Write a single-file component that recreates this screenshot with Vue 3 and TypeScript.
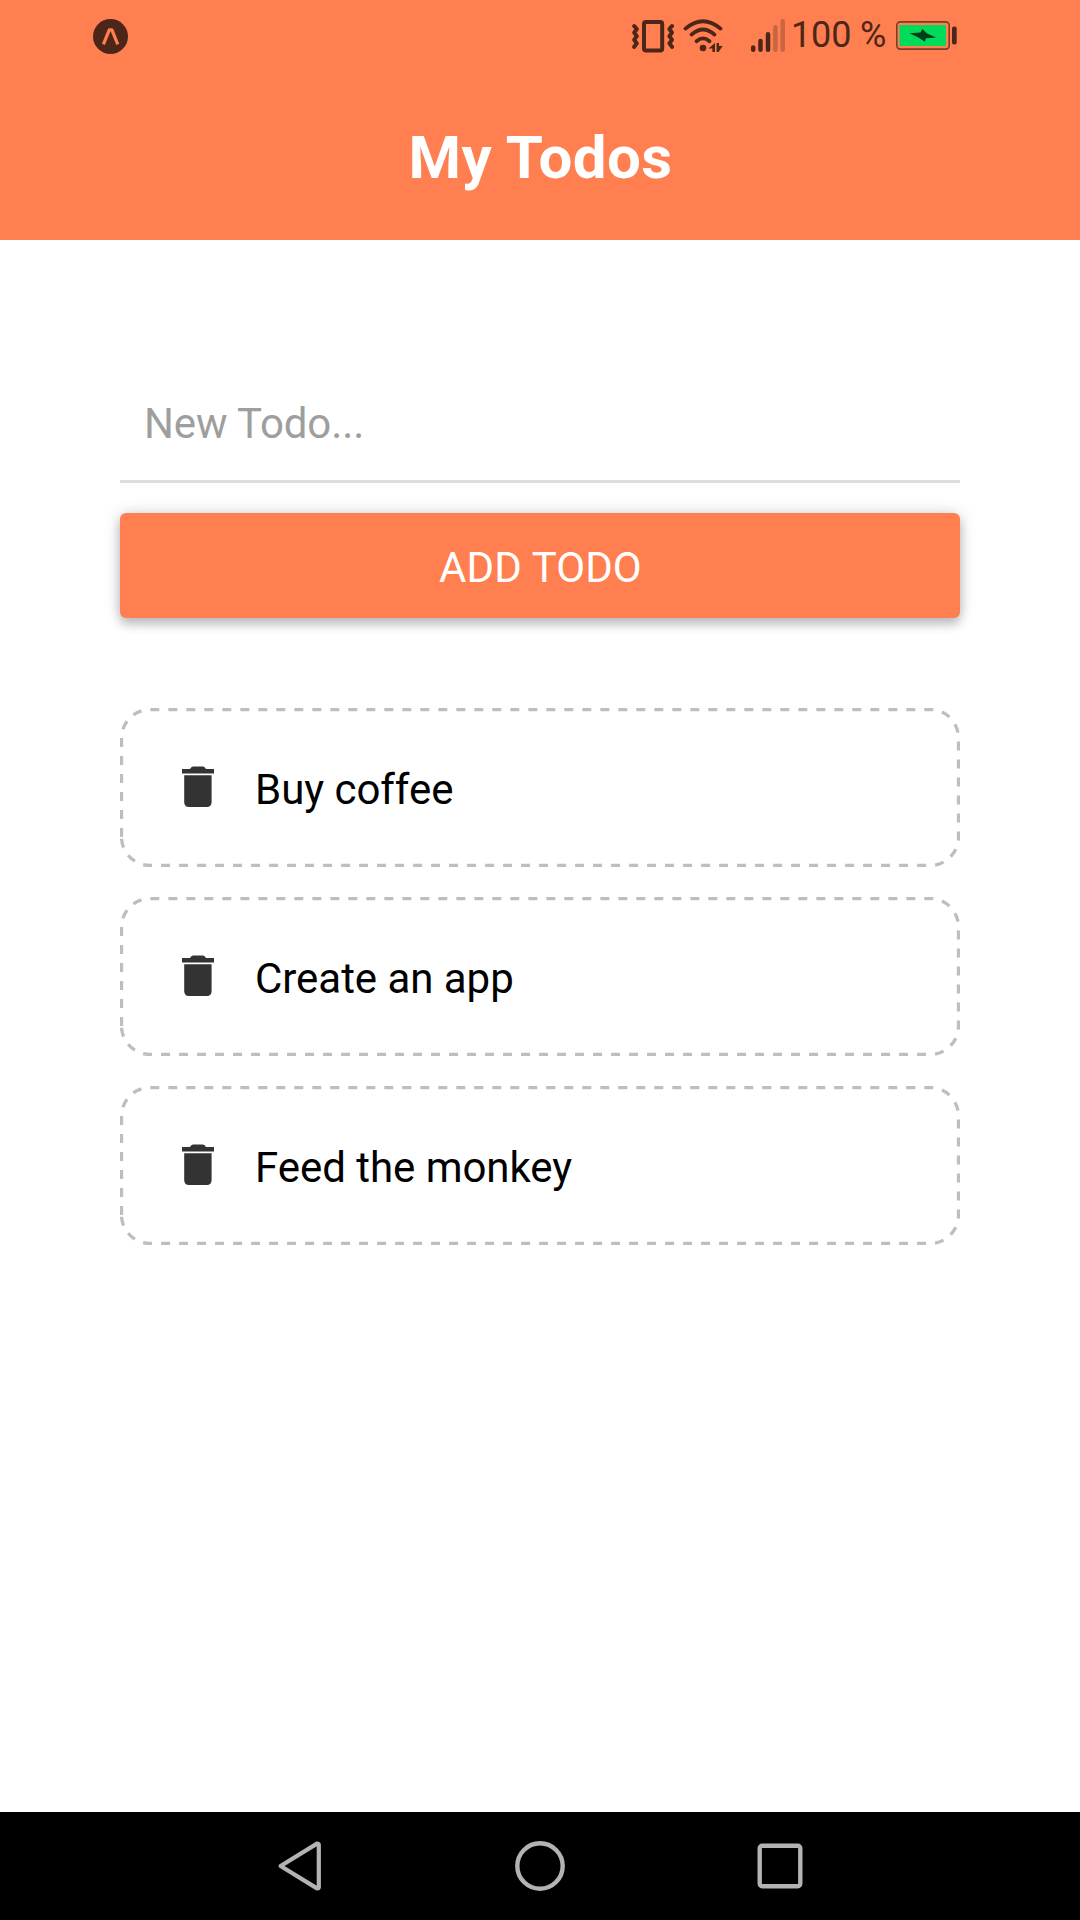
<script setup lang="ts">
import { ref } from 'vue'

interface Todo {
  key: number
  text: string
}

const draft = ref<string>('')
const todos = ref<Todo[]>([
  { key: 1, text: 'Buy coffee' },
  { key: 2, text: 'Create an app' },
  { key: 3, text: 'Feed the monkey' },
])

function addTodo(): void {
  const text = draft.value.trim()
  if (text.length < 1) return
  todos.value = [{ key: Date.now(), text }, ...todos.value]
  draft.value = ''
}

function removeTodo(key: number): void {
  todos.value = todos.value.filter((t) => t.key !== key)
}
</script>

<template>
  <div class="screen">
    <header class="header">
      <div class="status">
        <svg class="expo" width="36" height="36" viewBox="0 0 36 36">
          <circle cx="17.5" cy="17.5" r="17.5" fill="#4d261a" />
          <path d="M10.4 25.4 16.3 10.8H18.9L24.8 25.4" fill="none" stroke="#ff7f50" stroke-width="3.2" stroke-linejoin="round" />
        </svg>
        <div class="indicators">
          <svg class="vibrate" width="44" height="36" viewBox="0 0 44 36" fill="none" stroke="#4d261a">
            <rect x="12" y="4" width="18.2" height="28.6" rx="2" stroke-width="4" />
            <path d="M2.2 8 4.8 11 2.2 14.6 4.8 18.2 2.2 21.8 4.8 25.4 2.2 28.8M40 8 37.4 11 40 14.6 37.4 18.2 40 21.8 37.4 25.4 40 28.8" stroke-width="4" stroke-linecap="round" stroke-linejoin="round" />
          </svg>
          <svg class="wifi" width="42" height="36" viewBox="0 0 42 36">
            <g fill="none" stroke="#4d261a" stroke-width="3.8" stroke-linecap="round">
              <path d="M3.5 10.6Q21 -4.2 38.5 10.6" />
              <path d="M9.5 16.6Q21 6.4 32.5 16.6" />
              <path d="M14.5 23.2Q21 17.6 27.5 23.2" />
            </g>
            <circle cx="21" cy="30" r="3.3" fill="#4d261a" />
            <path d="M26.6 30.6 33 25V34h-2.6v-3.4zM34.6 25h2.4v2.9h3.6L36.6 34h-2z" fill="#4d261a" />
          </svg>
          <svg class="signal" width="36" height="36" viewBox="0 0 36 36" stroke="#4d261a" stroke-width="4.5" stroke-linecap="round">
            <path d="M3.2 29.5v2.2M10.5 23v8.7M18 16.2v15.5" />
            <path d="M25.4 9.2v22.5M32.7 3.2v28.5" stroke="#c96542" />
          </svg>
          <span class="percent">100 %</span>
          <svg class="battery" width="62" height="30" viewBox="0 0 62 30">
            <rect x=".8" y=".9" width="52.4" height="27.2" rx="3.5" fill="none" stroke="#7a3d27" stroke-width="1.6" />
            <rect x="3.5" y="4" width="46.5" height="21" fill="#00dc5a" />
            <path d="M13.5 12.3 24.6 11.4 26.2 8 31.2 12.6 40 16.4 29.9 17.2 28.9 20.7 22.4 16.5z" fill="#003d19" />
            <rect x="56" y="5.6" width="4.7" height="17.8" rx="2" fill="#4d261a" />
          </svg>
        </div>
      </div>
      <h1 class="title">My Todos</h1>
    </header>

    <main class="content">
      <form class="form" @submit.prevent="addTodo">
        <input v-model="draft" class="input" type="text" placeholder="New Todo..." />
        <button class="add" type="submit">ADD TODO</button>
      </form>

      <ul class="list">
        <li v-for="todo in todos" :key="todo.key" class="item">
          <svg class="outline" width="840" height="159" viewBox="0 0 840 159">
            <path
              d="M1.5 129V30A28.5 28.5 0 0 1 30 1.5H810A28.5 28.5 0 0 1 838.5 30V129A28.5 28.5 0 0 1 810 157.5H30A28.5 28.5 0 0 1 1.5 129"
              fill="none" stroke="#bebebe" stroke-width="3.3" stroke-dasharray="9 9"
            />
          </svg>
          <button class="remove" type="button" aria-label="Remove" @click="removeTodo(todo.key)">
            <svg width="32" height="41" viewBox="0 0 32 41" fill="#333">
              <path d="M0 3H8Q9.2 .5 11 .5H21Q22.8 .5 24 3H32V7.5H0z" />
              <path d="M2.2 9.3H29.6V36Q29.6 41 24.8 41H7Q2.2 41 2.2 36z" />
            </svg>
          </button>
          <span class="label">{{ todo.text }}</span>
        </li>
      </ul>
    </main>

    <nav class="nav">
      <svg width="60" height="60" viewBox="0 0 60 60">
        <path d="M10.6 30 47 7.6q1.8 0 1.8 1.4v42q0 1.4-1.8 1.4z" fill="none" stroke="#b3b3b3" stroke-width="4.2" stroke-linejoin="round" />
      </svg>
      <svg width="60" height="60" viewBox="0 0 60 60">
        <circle cx="30" cy="30" r="22.7" fill="none" stroke="#b3b3b3" stroke-width="4.4" />
      </svg>
      <svg width="60" height="60" viewBox="0 0 60 60">
        <rect x="9.7" y="9.7" width="40.6" height="40.6" rx="2.5" fill="none" stroke="#b3b3b3" stroke-width="4.4" />
      </svg>
    </nav>
  </div>
</template>

<style>
body {
  margin: 0;
  background: #fff;
}
</style>

<style scoped>
.screen {
  display: flex;
  flex-direction: column;
  width: 1080px;
  height: 1920px;
  overflow: hidden;
  background: #fff;
  font-family: Roboto, 'Noto Sans', sans-serif;
  color: #000;
}

svg {
  display: block;
  flex: none;
}

.header {
  flex: none;
  height: 240px;
  background: #ff7f50;
}

.status {
  display: flex;
  justify-content: space-between;
  height: 72px;
  padding: 0 122px 0 93px;
  box-sizing: border-box;
}

.expo {
  margin-top: 19px;
}

.indicators {
  display: flex;
  align-items: flex-start;
}

.vibrate,
.wifi,
.signal {
  margin-top: 18px;
}

.wifi {
  margin-left: 6px;
}

.signal {
  margin-left: 26px;
}

.percent {
  width: 105px;
  margin: 14px 0 0 5px;
  font-size: 36px;
  line-height: 42px;
  letter-spacing: -0.15px;
  white-space: nowrap;
  color: #4d261a;
}

.battery {
  margin-top: 21px;
}

.title {
  margin: 0;
  padding: 51px 0 0 1px;
  font-size: 60px;
  line-height: 70px;
  font-weight: 700;
  letter-spacing: 0.45px;
  text-align: center;
  color: #fff;
}

.content {
  flex: 1;
  padding: 120px;
}

.form {
  display: flex;
  flex-direction: column;
  gap: 30px;
}

.input {
  height: 123px;
  padding: 7px 24px 0;
  box-sizing: border-box;
  border: 0;
  border-bottom: 3px solid #ddd;
  background: none;
  outline: none;
  font: 42px Roboto, 'Noto Sans', sans-serif;
  letter-spacing: -0.1px;
  color: #000;
}

.input::placeholder {
  color: #9e9e9e;
  opacity: 1;
}

.add {
  height: 105px;
  padding: 4px 0 0 1px;
  border: 0;
  border-radius: 6px;
  background: #ff7f50;
  box-shadow: 0 7px 10px rgba(0, 0, 0, 0.16), 0 1px 16px rgba(0, 0, 0, 0.21);
  font: 42px Roboto, 'Noto Sans', sans-serif;
  letter-spacing: 0.1px;
  color: #fff;
}

.list {
  display: flex;
  flex-direction: column;
  gap: 30px;
  margin: 90px 0 0;
  padding: 0;
  list-style: none;
}

.item {
  position: relative;
  display: flex;
  align-items: flex-start;
  height: 159px;
  padding-left: 62px;
  box-sizing: border-box;
}

.outline {
  position: absolute;
  inset: 0;
  pointer-events: none;
}

.remove {
  margin: 58px 0 0;
  padding: 0;
  border: 0;
  background: none;
}

.label {
  margin: 57px 0 0 41px;
  font-size: 42px;
  line-height: 50px;
  letter-spacing: -0.04px;
}

.nav {
  flex: none;
  display: flex;
  justify-content: center;
  align-items: center;
  gap: 180px;
  height: 108px;
  background: #000;
}
</style>
